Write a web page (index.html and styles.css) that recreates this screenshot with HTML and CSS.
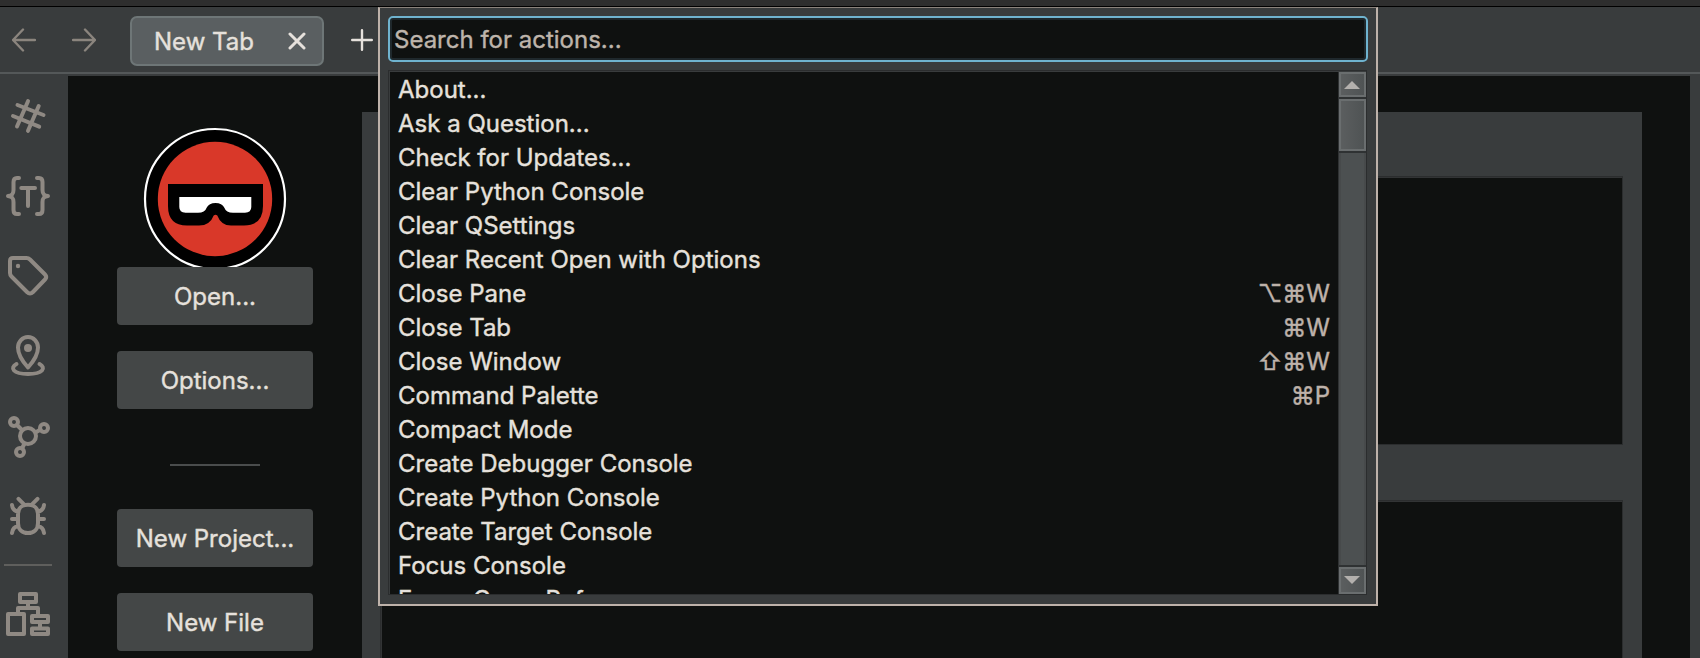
FILE: index.html
```html
<!DOCTYPE html>
<html lang="en">
<head>
<meta charset="utf-8">
<title>Command Palette</title>
<link rel="stylesheet" href="styles.css">
</head>
<body>
<div class="window">
  <div class="titlebar"></div>
  <header class="toolbar">
    <svg class="nav" viewBox="0 0 24 24"><path d="M23 12H1.500M11 1.500L1 12l10 10.500"/></svg>
    <svg class="nav forward" viewBox="0 0 24 24"><path d="M1 12h21.500M13 1.500L23 12 13 22.500"/></svg>
    <div class="tab"><span>New Tab</span><svg class="close" viewBox="0 0 18 18"><path d="M2 2l14 14M16 2L2 16"/></svg></div>
    <svg class="plus" viewBox="0 0 22 22"><path d="M11 1.200v19.600M1.200 11h19.600"/></svg>
  </header>
  <div class="main">
    <nav class="sidebar">
      <svg class="icon" viewBox="0 0 48 48"><path d="M24 9.200L13 34.500M34.700 14L24 38.800M13.500 13l26 10M9 24l26.200 10.700"/></svg>
      <svg class="icon" viewBox="0 0 48 48"><path d="M15 6h-2q-3.500 0-3.500 4v8c0 4-1.500 5.500-5.500 6 4 .5 5.500 2 5.500 6v8q0 4 3.500 4h2M33 6h2q3.500 0 3.500 4v8c0 4 1.500 5.500 5.500 6-4 .5-5.500 2-5.500 6v8q0 4-3.500 4h-2M17.300 16h13.700M24 16v18"/></svg>
      <svg class="icon" viewBox="0 0 48 48"><path d="M9 6h13.500q2 0 3.500 1.500l15 15q2.500 2.500 0 5L29 40q-3 3-6 0L7.500 24.500Q6 23 6 21V9q0-3 3-3z"/><circle class="solid" cx="14" cy="14" r="2.200"/></svg>
      <svg class="icon" viewBox="0 0 48 48"><path d="M24 35.500C19 30 14 23.500 14 15.500a10 10.500 0 0 1 20 0C34 23.500 29 30 24 35.500zM12.500 32C5.500 36 9 42 24 42s18.500-6 11.500-10"/><circle class="solid" cx="24" cy="16" r="4"/></svg>
      <svg class="icon" viewBox="0 0 48 48"><circle cx="24" cy="24" r="8"/><circle cx="10" cy="10" r="4"/><circle cx="40" cy="16" r="4"/><circle cx="16" cy="40" r="4"/><path d="M13 13l5 5M31.500 20.500l5-3M20.500 31.500l-2.500 5"/></svg>
      <svg class="icon" viewBox="0 0 48 48"><path d="M24 12.700c7 0 10 4.500 10 9v9.300c0 6-4 10-10 10s-10-4-10-10V21.700c0-4.500 3-9 10-9zM14.500 6.800l6 6M33.500 6.800l-6 6M8 13c.5 4 2 6 6 6.500M40 13c-.5 4-2 6-6 6.500M8 27h5M35 27h5M8 41c.5-4.500 2.500-6.500 6.500-7M40 41c-.5-4.500-2.500-6.500-6.500-7"/></svg>
      <div class="side-rule"></div>
      <svg class="icon tree" viewBox="0 0 48 48"><path d="M16 4h16v8H16zM24 12v6M14 24v-6h20v8M4 24h16v20H4zM28 26h16v6H28zM28 38.500h16V44H28zM36 32v6"/></svg>
    </nav>
    <div class="content">
      <section class="launcher">
        <div class="logo-box">
          <svg class="logo" viewBox="0 0 144 144">
            <circle cx="72" cy="72" r="70" fill="#000" stroke="#fff" stroke-width="2.200"/>
            <circle cx="72" cy="72" r="57.200" fill="#d93829"/>
            <path d="M25 57H120V79Q120 98.500 101 98.500H88Q78 98.500 74.300 88.500Q72.500 87 70.700 88.500Q67 98.500 56 98.500H44Q25 98.500 25 79z" fill="#000"/>
            <path d="M36.300 70H108.300V80Q108.300 85.700 102 85.700H90Q83 85.700 81.500 81Q79 76 72.500 76Q66 76 63.500 81Q62 85.700 55 85.700H42.500Q36.300 85.700 36.300 80z" fill="#fff"/>
          </svg>
        </div>
        <button class="action">Open...</button>
        <button class="action">Options...</button>
        <div class="rule"></div>
        <button class="action">New Project...</button>
        <button class="action">New File</button>
      </section>
      <section class="panel">
        <div class="well"></div>
        <div class="well tall"></div>
      </section>
    </div>
  </div>
  <div class="palette">
    <div class="search">Search for actions...</div>
    <div class="list">
      <div class="items">
        <div class="item"><span>About...</span></div>
        <div class="item"><span>Ask a Question...</span></div>
        <div class="item"><span>Check for Updates...</span></div>
        <div class="item"><span>Clear Python Console</span></div>
        <div class="item"><span>Clear QSettings</span></div>
        <div class="item"><span>Clear Recent Open with Options</span></div>
        <div class="item"><span>Close Pane</span><span class="keys">⌥⌘W</span></div>
        <div class="item"><span>Close Tab</span><span class="keys">⌘W</span></div>
        <div class="item"><span>Close Window</span><span class="keys">⇧⌘W</span></div>
        <div class="item"><span>Command Palette</span><span class="keys">⌘P</span></div>
        <div class="item"><span>Compact Mode</span></div>
        <div class="item"><span>Create Debugger Console</span></div>
        <div class="item"><span>Create Python Console</span></div>
        <div class="item"><span>Create Target Console</span></div>
        <div class="item"><span>Focus Console</span></div>
        <div class="item"><span>Focus Cross References</span></div>
      </div>
      <div class="scrollbar">
        <div class="step up"><svg viewBox="0 0 16 8"><path d="M0 8L8 0l8 8z"/></svg></div>
        <div class="thumb"></div>
        <div class="track"></div>
        <div class="step down"><svg viewBox="0 0 16 8"><path d="M0 0h16L8 8z"/></svg></div>
      </div>
    </div>
  </div>
</div>
</body>
</html>
```

FILE: styles.css
```css
* { box-sizing: border-box; }
body {
  margin: 0;
  background: #0f1110;
  color: #e6e1dc;
  font: 24px/34px Inter, sans-serif;
  -webkit-text-stroke: 0.4px;
}
.window {
  position: relative;
  display: flex;
  flex-direction: column;
  width: 1700px;
  height: 658px;
  overflow: hidden;
}
.titlebar { flex: none; height: 7px; background: #2e2e2e; border-bottom: 1px solid #000; }
.toolbar {
  flex: none;
  display: flex;
  align-items: flex-start;
  height: 67px;
  padding: 9px 12px 0;
  background: #393c3d;
  border-bottom: 2px solid #545859;
}
svg { fill: none; display: block; flex: none; }
.nav { width: 24px; height: 24px; margin-top: 12px; stroke: #8b857e; stroke-width: 2.4; stroke-linecap: round; stroke-linejoin: round; }
.forward { margin-left: 36px; }
.tab {
  display: flex;
  align-items: center;
  justify-content: space-between;
  width: 194px;
  height: 50px;
  margin-left: 34px;
  padding: 0 16px 0 22px;
  background: #5a5f61;
  border: 2px solid #6e7677;
  border-radius: 7px;
}
.tab span { padding-top: 2px; }
.close { width: 18px; height: 18px; stroke: #e6e1dc; stroke-width: 3; stroke-linecap: round; }
.plus { width: 22px; height: 22px; margin: 13px 0 0 27px; stroke: #e6e1dc; stroke-width: 2.4; stroke-linecap: round; }
.main { flex: 1; display: flex; min-height: 0; background: #393c3d; padding-right: 10px; }
.sidebar {
  display: flex;
  flex-direction: column;
  width: 68px;
  padding: 18px 4px 0;
  gap: 32px;
}
.icon { width: 48px; height: 48px; stroke: #8f8983; stroke-width: 4; stroke-linecap: round; stroke-linejoin: round; }
.icon .solid { fill: #8f8983; stroke: none; }
.tree { margin-top: -8px; stroke-linecap: butt; }
.side-rule { flex: none; width: 48px; height: 2px; margin-top: -8px; background: #5f5f5d; }
.content { flex: 1; display: flex; margin-top: 2px; background: #0f1110; }
.launcher {
  display: flex;
  flex-direction: column;
  align-items: center;
  width: 294px;
  padding-top: 51px;
  gap: 26px;
}
.logo-box { flex: none; height: 140px; margin-bottom: -26px; overflow: hidden; }
.logo { width: 144px; height: 144px; }
.action {
  flex: none;
  width: 196px;
  height: 58px;
  padding: 2px 0 0;
  border: 0;
  border-radius: 4px;
  background: #444747;
  color: inherit;
  font: inherit;
  -webkit-text-stroke: inherit;
}
.rule { flex: none; width: 90px; height: 2px; margin: 29px 0 17px; background: #4a4d4d; }
.panel {
  display: flex;
  flex-direction: column;
  width: 1280px;
  margin-top: 36px;
  padding: 64px 19px 0 18px;
  gap: 55px;
  background: #393c3d;
}
.well { flex: none; height: 269px; background: #0f1110; border: 1px solid #2b2d2e; box-shadow: inset 1px 1px #323435; }
.well.tall { flex: 1; border-bottom: 0; }
.palette {
  position: absolute;
  left: 378px;
  top: 7px;
  width: 1000px;
  height: 599px;
  padding: 8px 8px;
  background: #393c3d;
  border: 2px solid #beb2aa;
  border-top: 1px solid #8a827c;
}
.search {
  height: 46px;
  padding: 5px 4px;
  background: #0f1110;
  border: 2px solid #6fb3cf;
  border-radius: 5px;
  box-shadow: inset 0 0 0 2px #1f282c;
  color: #beb4ab;
}
.list {
  display: flex;
  width: 979px;
  height: 525px;
  margin-top: 8px;
  padding: 1px 0 0 1px;
  background: #393c3d;
  border: 1px solid #2b2d2e;
}
.items { flex: 1; overflow: hidden; background: #0f1110; padding: 1px 8px 0; }
.item { display: flex; justify-content: space-between; height: 34px; white-space: nowrap; }
.keys { color: #beb2aa; }
.scrollbar { display: flex; flex-direction: column; width: 28px; background: #2f3233; padding-left: 1px; }
.step, .thumb { border: 2px solid #6a6e6f; background: linear-gradient(90deg, #5b5e5f, #4f5354); }
.step { flex: none; display: flex; align-items: center; height: 25px; padding-left: 3px; }
.step svg { width: 16px; height: 8px; fill: #b3b0ad; }
.down { height: 27px; }
.down svg { margin-top: -1px; }
.thumb { flex: none; height: 52px; margin: 2px 0; }
.track { flex: 1; margin-bottom: 2px; background: #4c5051; border: solid #474a4b; border-width: 0 2px; }
```
